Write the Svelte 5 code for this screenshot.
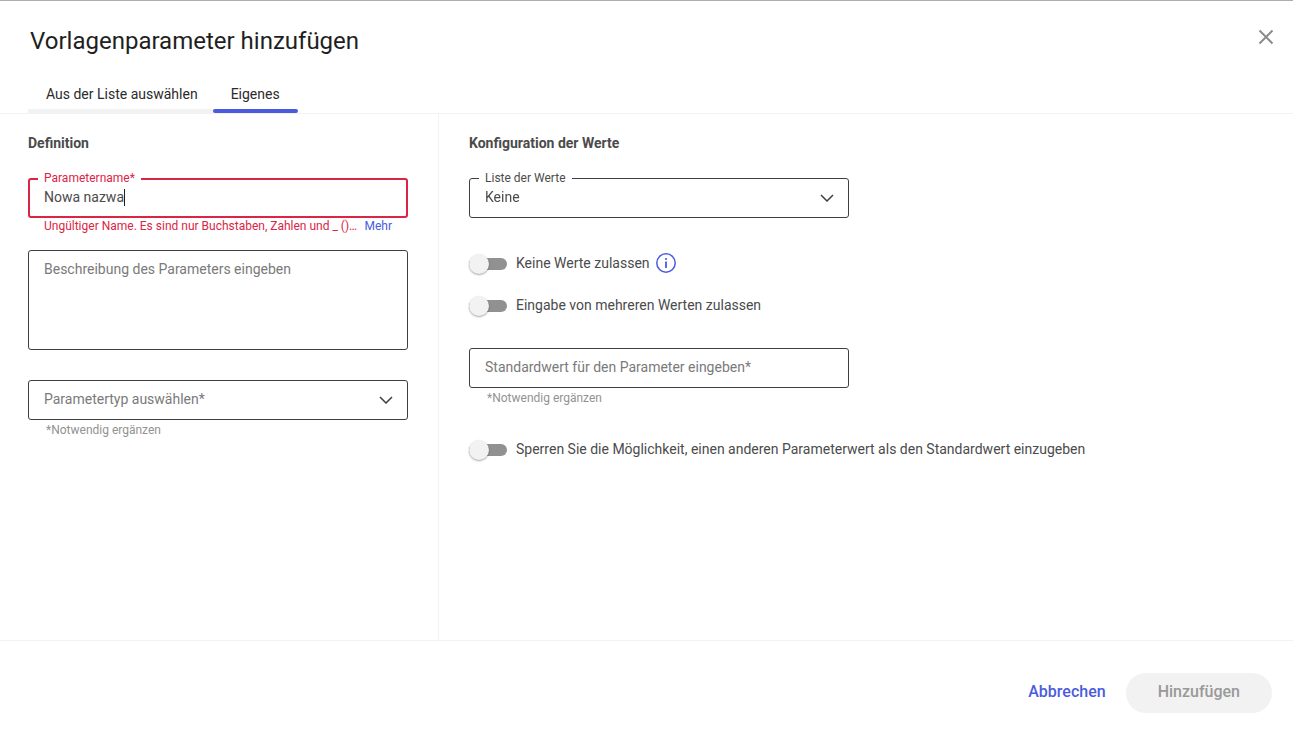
<script>
  import { onMount } from 'svelte'

  const tabs = [
    { id: 'list', label: 'Aus der Liste auswählen' },
    { id: 'custom', label: 'Eigenes' }
  ]

  let activeTab = 'custom'
  let name = 'Nowa nazwa'
  let description = ''
  let type = ''
  let valueList = 'none'
  let defaultValue = ''
  let allowEmpty = false
  let allowMultiple = false
  let lockDefault = false
  let nameInput
  let caretLeft = null

  // required fields filled and the name holds no spaces
  $: nameValid = /^[\w()]+$/.test(name)
  $: canSubmit = nameValid && type !== '' && defaultValue !== ''

  // steady caret of the name field, placed by the width of the text before it
  function placeCaret()
  {
    const style = getComputedStyle(nameInput)
    const ctx = document.createElement('canvas').getContext('2d')
    ctx.font = `${style.fontSize} ${style.fontFamily}`
    const before = nameInput.value.slice(0, nameInput.selectionStart)
    caretLeft = Math.floor(16 + ctx.measureText(before).width) - nameInput.scrollLeft
  }

  onMount(() => {
    nameInput.focus()
    nameInput.setSelectionRange(name.length, name.length)
    placeCaret()
  })
</script>

<div class="dialog" role="dialog" aria-labelledby="dialog-title">
  <header>
    <div class="title-row">
      <h1 id="dialog-title">Vorlagenparameter hinzufügen</h1>
      <button class="close" aria-label="Schließen">
        <svg width="16" height="16" viewBox="0 0 16 16">
          <path d="M1.5 1.5l13 13M14.5 1.5l-13 13" fill="none" stroke="#8c8c8c" stroke-width="2" />
        </svg>
      </button>
    </div>
    <div class="tabs" role="tablist">
      {#each tabs as tab (tab.id)}
        <button
          role="tab"
          class="tab"
          class:active={activeTab === tab.id}
          aria-selected={activeTab === tab.id}
          on:click={() => activeTab = tab.id}
        >{tab.label}</button>
      {/each}
    </div>
  </header>

  <main>
    <section class="definition">
      <h2>Definition</h2>

      <div class="field" class:invalid={!nameValid}>
        <label class="floating" for="name">Parametername*</label>
        <input
          id="name"
          class="name"
          type="text"
          autocomplete="off"
          spellcheck="false"
          bind:value={name}
          bind:this={nameInput}
          on:input={placeCaret}
          on:keyup={placeCaret}
          on:click={placeCaret}
          on:focus={placeCaret}
          on:blur={() => caretLeft = null}
        />
        {#if caretLeft !== null}
          <span class="caret" style="left: {caretLeft}px"></span>
        {/if}
      </div>
      <div class="error">
        {#if !nameValid}
          <span>Ungültiger Name. Es sind nur Buchstaben, Zahlen und _ ()…</span>
          <a href="#more">Mehr</a>
        {/if}
      </div>

      <div class="field">
        <textarea aria-label="Beschreibung des Parameters" placeholder="Beschreibung des Parameters eingeben" bind:value={description}></textarea>
      </div>

      <div class="field type">
        <select aria-label="Parametertyp" class:empty={type === ''} bind:value={type}>
          <option value="" disabled>Parametertyp auswählen*</option>
          <option value="text">Text</option>
          <option value="number">Zahl</option>
        </select>
        <svg class="chevron" width="14" height="8" viewBox="0 0 14 8">
          <path d="M1 1l6 6 6-6" />
        </svg>
      </div>
      <p class="hint">*Notwendig ergänzen</p>
    </section>

    <section class="values">
      <h2>Konfiguration der Werte</h2>

      <div class="field">
        <label class="floating" for="value-list">Liste der Werte</label>
        <select id="value-list" bind:value={valueList}>
          <option value="none">Keine</option>
        </select>
        <svg class="chevron" width="14" height="8" viewBox="0 0 14 8">
          <path d="M1 1l6 6 6-6" />
        </svg>
      </div>

      <div class="switches">
        <div class="switch-row">
          <label><input type="checkbox" bind:checked={allowEmpty} /><span>Keine Werte zulassen</span></label>
          <button class="info" aria-label="Information">
            <svg width="20" height="20" viewBox="0 0 20 20">
              <circle cx="10" cy="10" r="9.2" fill="none" stroke="#4a5be0" stroke-width="1.5" />
              <circle cx="10" cy="6" r="1.1" fill="#4a5be0" />
              <path d="M10 8.5v6.5" stroke="#4a5be0" stroke-width="1.8" />
            </svg>
          </button>
        </div>
        <div class="switch-row">
          <label><input type="checkbox" bind:checked={allowMultiple} /><span>Eingabe von mehreren Werten zulassen</span></label>
        </div>
      </div>

      <div class="field">
        <input type="text" aria-label="Standardwert" placeholder="Standardwert für den Parameter eingeben*" bind:value={defaultValue} />
      </div>
      <p class="hint">*Notwendig ergänzen</p>

      <div class="switch-row lock">
        <label><input type="checkbox" bind:checked={lockDefault} /><span>Sperren Sie die Möglichkeit, einen anderen Parameterwert als den Standardwert einzugeben</span></label>
      </div>
    </section>
  </main>

  <footer>
    <button class="cancel">Abbrechen</button>
    <button class="submit" disabled={!canSubmit}>Hinzufügen</button>
  </footer>
</div>

<style>
  :global(body) {
    background: #fff;
  }
  .dialog, .dialog * {
    box-sizing: border-box;
  }
  .dialog {
    display: flex;
    flex-direction: column;
    min-height: 100vh;
    border-top: 1px solid #adadad;
    color: #4b4b4b;
    font-family: Roboto, "Liberation Sans", sans-serif;
    font-size: 14px;
  }
  h1, h2, p {
    margin: 0;
  }
  button {
    padding: 0;
    border: none;
    background: none;
    font: inherit;
    cursor: pointer;
  }

  header {
    padding: 24px 0 0;
    border-bottom: 1px solid #f2f2f2;
  }
  .title-row {
    display: flex;
    justify-content: space-between;
    align-items: flex-start;
    padding: 0 19px 0 30px;
  }
  h1 {
    color: #1f1f1f;
    font-size: 24px;
    font-weight: 400;
    line-height: 32px;
  }
  .close {
    display: flex;
    margin-top: 4px;
  }
  .tabs {
    display: flex;
    padding: 20px 28px 0;
  }
  .tab {
    height: 36px;
    padding: 2px 18px 0;
    border-bottom: 4px solid #f2f2f2;
    color: #2b2b2b;
  }
  /* neighbouring tabs overlap a little, so the rounded bar covers the grey one */
  .tab + .tab {
    margin-left: -3px;
  }
  .tab.active {
    position: relative;
    border-color: transparent;
  }
  .tab.active::after {
    content: "";
    position: absolute;
    left: 0;
    right: 0;
    bottom: -4px;
    height: 4px;
    border-radius: 2px;
    background: #4a5be0;
  }

  main {
    display: grid;
    grid-template-columns: minmax(280px, 439px) 1fr;
    flex: 1;
  }
  section {
    padding: 20px 30px;
  }
  .definition {
    padding-left: 28px;
    border-right: 1px solid #f2f2f2;
  }
  h2 {
    margin-bottom: 26px;
    font-size: 14px;
    font-weight: 700;
    line-height: 18px;
  }

  .field {
    position: relative;
    display: flex;
    max-width: 380px;
  }
  .field input, .field select, .field textarea {
    appearance: none;
    width: 100%;
    height: 40px;
    margin: 0;
    padding: 0 15px 2px;
    border: 1px solid #3f3f3f;
    border-radius: 3px;
    outline: none;
    background: #fff;
    color: #4b4b4b;
    font: inherit;
  }
  .field textarea {
    height: 100px;
    padding-top: 10px;
    resize: none;
  }
  .field select.empty, ::placeholder {
    color: #7a7a7a;
    opacity: 1;
  }
  .field.invalid input {
    padding: 0 14px 2px;
    border: 2px solid #dc2446;
  }
  .name {
    caret-color: transparent;
  }
  .caret {
    position: absolute;
    top: 11px;
    width: 1px;
    height: 17px;
    background: #1f1f1f;
    pointer-events: none;
  }
  .floating {
    position: absolute;
    top: -8px;
    left: 10px;
    padding: 0 6px;
    background: #fff;
    font-size: 12px;
    line-height: 16px;
  }
  .invalid .floating {
    color: #dc2446;
  }
  .chevron {
    position: absolute;
    top: 16px;
    right: 15px;
    fill: none;
    stroke: #3f3f3f;
    stroke-width: 1.5;
    pointer-events: none;
  }
  .error, .hint {
    max-width: 380px;
    font-size: 12px;
    line-height: 16px;
  }
  .error {
    display: flex;
    justify-content: space-between;
    min-height: 16px;
    margin-bottom: 16px;
    padding: 0 16px;
    color: #dc2446;
  }
  .error a {
    color: #4a5be0;
    text-decoration: none;
  }
  .hint {
    margin-top: 2px;
    padding: 0 18px;
    color: #929292;
  }
  .type {
    margin-top: 30px;
  }

  .switches {
    display: flex;
    flex-direction: column;
    gap: 20px;
    margin: 35px 0 31px;
  }
  .switch-row {
    display: flex;
    align-items: center;
    gap: 6px;
    min-height: 22px;
  }
  .switch-row label {
    display: flex;
    align-items: center;
    gap: 9px;
    line-height: 20px;
    cursor: pointer;
  }
  .switch-row span, .info {
    padding-bottom: 2px;
  }
  .switch-row input {
    appearance: none;
    position: relative;
    flex: none;
    width: 38px;
    height: 12px;
    margin: 0;
    border-radius: 6px;
    background: #919191;
  }
  .switch-row input::before {
    content: "";
    position: absolute;
    top: -4px;
    left: 0;
    width: 20px;
    height: 20px;
    border-radius: 50%;
    background: #f2f2f2;
    box-shadow: 0 1px 2px rgba(0, 0, 0, 0.35);
  }
  .switch-row input:checked {
    background: #4a5be0;
  }
  .switch-row input:checked::before {
    left: 18px;
  }
  .info {
    display: flex;
  }
  .lock {
    margin-top: 33px;
  }

  footer {
    display: flex;
    justify-content: flex-end;
    gap: 20px;
    padding: 32px 21px 20px;
    border-top: 1px solid #f2f2f2;
  }
  footer button {
    height: 40px;
    padding-bottom: 4px;
    font-size: 16px;
    font-weight: 500;
  }
  .cancel {
    color: #4a5be0;
  }
  .submit {
    padding: 0 32px 4px;
    border-radius: 20px;
    background: #4a5be0;
    color: #fff;
  }
  .submit:disabled {
    background: #f2f2f2;
    color: #999;
    cursor: default;
  }
</style>
